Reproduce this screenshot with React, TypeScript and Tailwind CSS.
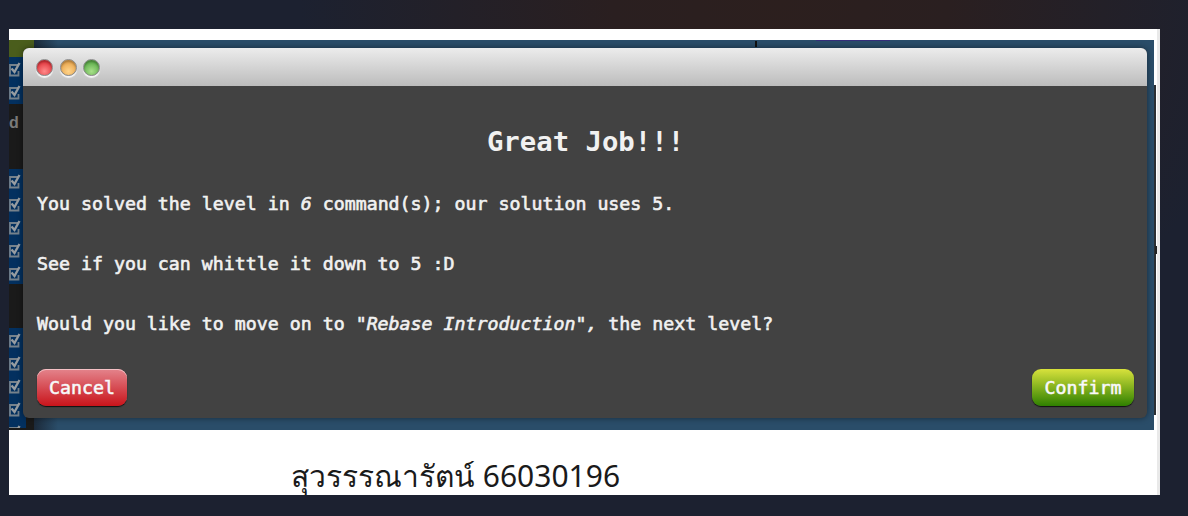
const mono = "font-['DejaVu_Sans_Mono','Liberation_Mono',monospace]";

function Check() {
  return (
    <svg width="13" height="16" viewBox="0 0 13 16" fill="none" className="block -ml-[1px]">
      <path d="M10.5 4H2V14.5H10.5V10" stroke="#76828c" strokeWidth="1.8" />
      <path d="M3.5 7.5L6.5 11L11.5 2" stroke="#979da2" strokeWidth="2.4" />
    </svg>
  );
}

function CheckGroup({ count, className }: { count: number; className: string }) {
  return (
    <div className={`flex flex-col items-start overflow-hidden ${className}`}>
      {Array.from({ length: count }).map((_, i) => (
        <div key={i} className="h-[23px] shrink-0 flex items-center">
          <Check />
        </div>
      ))}
    </div>
  );
}

function Light({ className }: { className: string }) {
  return (
    <span
      className={`w-[17px] h-[17px] rounded-full border border-[#8a8a8a] shadow-[0_2px_1px_#f4f4f4,inset_0_2px_2px_rgba(0,0,0,0.25)] ${className}`}
    />
  );
}

export default function App() {
  return (
    <div className="h-[516px] w-[1188px] overflow-hidden bg-[#1a2130] bg-[radial-gradient(ellipse_480px_400px_at_780px_0px,#2c1f1e_0%,#2a1f20_35%,#1c2130_100%)] pt-[29px] pl-[9px]">
      <div className="relative h-[466px] w-[1151px] overflow-hidden bg-white border-r-[3px] border-r-[#e9e9e9] pt-[11px]">
        {/* captured page behind the dialog */}
        <div className="flex h-[390px] w-[1145px] bg-[#2a4d69]">
          <div className="flex w-[25px] shrink-0 flex-col bg-[#1a1a1a]">
            <div className="h-[18px] bg-[#4a5d1c]" />
            <CheckGroup count={2} className="h-[47px] w-[14px] bg-[#03305f] -mt-[1px]" />
            <div className="h-[65px] pt-[11px] text-[#7a7a7a] text-[16px] font-bold leading-none font-['Liberation_Sans',sans-serif]">
              d
            </div>
            <CheckGroup count={5} className="h-[115px] w-[14px] bg-[#03305f]" />
            <div className="h-[44px]" />
            <CheckGroup count={5} className="h-[100px] w-[17px] bg-[#03305f]" />
          </div>
          <div className="relative flex-1 bg-[linear-gradient(90deg,#1c2a3a_0,#2a4d69_24px)]">
            <div className="absolute left-[721px] top-[1px] h-[6px] w-[2px] bg-[#111]" />
            <div className="absolute left-[782px] top-0 h-[1px] w-[74px] bg-[#352f7a]" />
          </div>
        </div>
        <div className="absolute right-[1px] top-[19px] h-[367px] w-[2px] bg-[#2b2f33]">
          <div className="h-[37px] bg-white" />
        </div>
        <div className="absolute right-[-3px] top-[217px] h-[8px] w-[5px] border-2 border-[#222] bg-white" />

        {/* caption */}
        <p className="pl-[282px] pt-[24px] text-[30px] leading-[44px] text-[#1a1a1a] font-['Noto_Sans','DejaVu_Sans',sans-serif]">
          สุวรรรณารัตน์ 66030196
        </p>

        {/* dialog */}
        <div
          className={`absolute left-[14px] top-[19px] flex h-[370px] w-[1124px] flex-col overflow-hidden rounded-[6px] bg-[#424242] text-[#f1f1f1] shadow-[0_0_6px_rgba(0,0,0,0.45)] ${mono}`}
        >
          <div className="flex h-[38px] shrink-0 items-center gap-[6.5px] pl-[13px] bg-[linear-gradient(#ececec,#bcbcbc)]">
            <Light className="bg-[radial-gradient(circle_at_50%_75%,#ff8a8a,#e2383f_70%)]" />
            <Light className="bg-[radial-gradient(circle_at_50%_75%,#ffd48a,#e8a64e_70%)]" />
            <Light className="bg-[radial-gradient(circle_at_50%_75%,#a8e08a,#5fae4c_70%)]" />
          </div>
          <div className="flex flex-1 flex-col pl-[14px] pr-[13px] text-[18.25px] leading-[22px] [-webkit-text-stroke:0.6px_#f1f1f1]">
            <h1 className="mt-[39px] text-center text-[27.3px] leading-[34px] font-bold [-webkit-text-stroke:0]">
              Great Job!!!
            </h1>
            <p className="mt-[34px]">
              You solved the level in <em>6</em> command(s); our solution uses 5.
            </p>
            <p className="mt-[38px]">See if you can whittle it down to 5 :D</p>
            <p className="mt-[38px]">
              Would you like to move on to <em>"Rebase Introduction",</em> the next level?
            </p>
            <div className="mt-[34px] flex justify-between">
              <button className="h-[37px] w-[90px] rounded-[9px] text-white bg-[linear-gradient(#e4848c,#c9141b)] shadow-[0_1px_1px_#111,inset_0_1px_0_#f4c0c4]">
                Cancel
              </button>
              <button className="h-[37px] w-[102px] rounded-[9px] text-white bg-[linear-gradient(#d8e23c,#2f8000)] shadow-[0_1px_1px_#111]">
                Confirm
              </button>
            </div>
          </div>
        </div>
      </div>
    </div>
  );
}
